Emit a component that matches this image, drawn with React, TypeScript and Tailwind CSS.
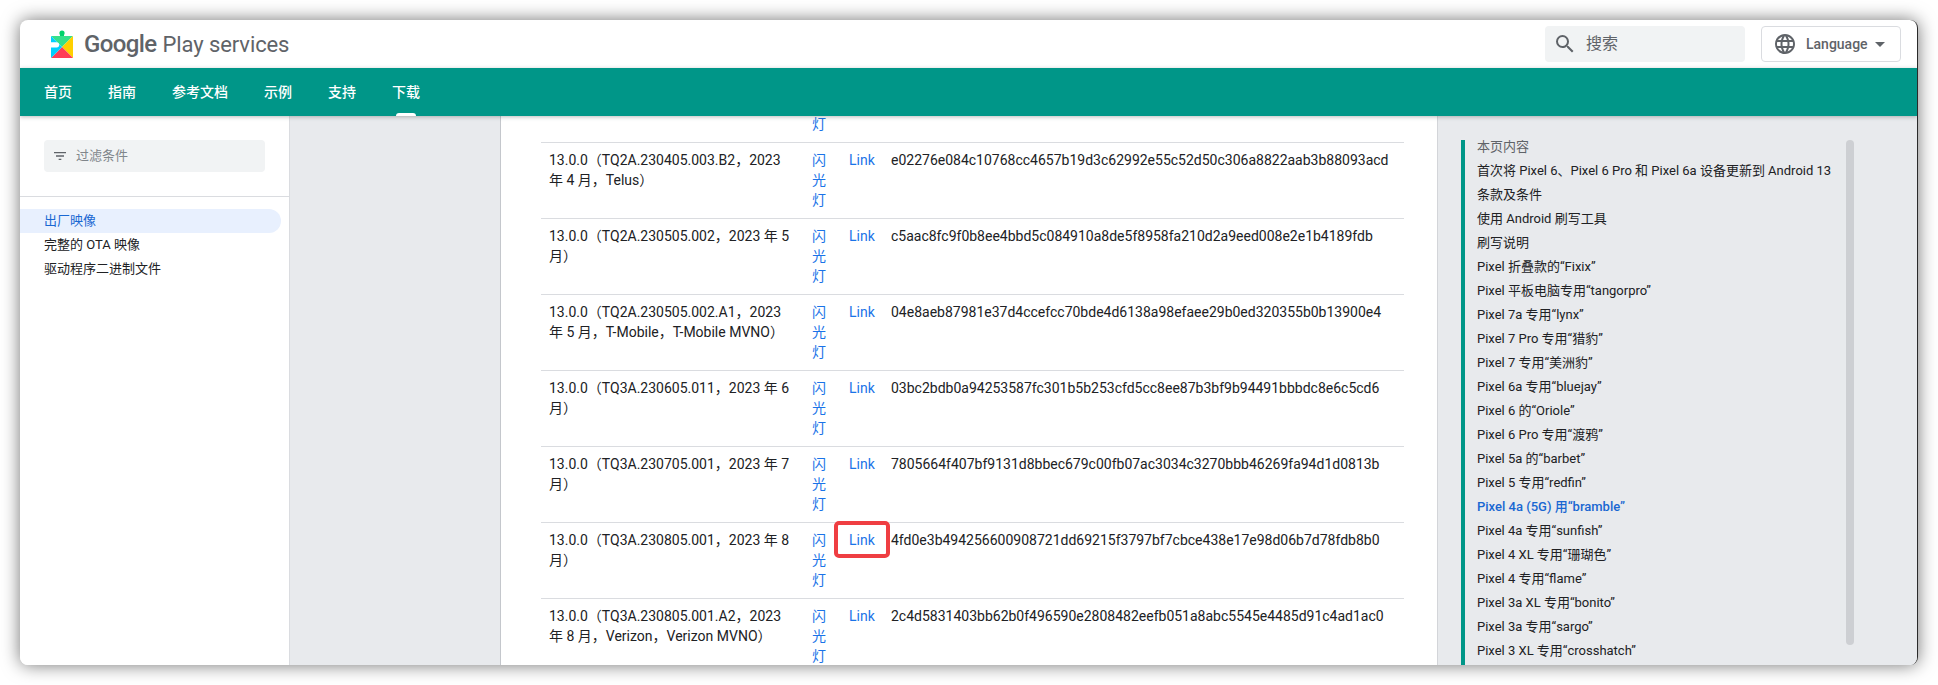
import React from "react";
import { MdSearch, MdLanguage, MdFilterList, MdArrowDropDown } from "react-icons/md";

const rows = [
  { a: "13.0.0（TQ2A.230405.003.B2，2023 年 4 月，Telus）", h: "e02276e084c10768cc4657b19d3c62992e55c52d50c306a8822aab3b88093acd" },
  { a: "13.0.0（TQ2A.230505.002，2023 年 5 月）", h: "c5aac8fc9f0b8ee4bbd5c084910a8de5f8958fa210d2a9eed008e2e1b4189fdb" },
  { a: "13.0.0（TQ2A.230505.002.A1，2023 年 5 月，T-Mobile，T-Mobile MVNO）", h: "04e8aeb87981e37d4ccefcc70bde4d6138a98efaee29b0ed320355b0b13900e4" },
  { a: "13.0.0（TQ3A.230605.011，2023 年 6 月）", h: "03bc2bdb0a94253587fc301b5b253cfd5cc8ee87b3bf9b94491bbbdc8e6c5cd6" },
  { a: "13.0.0（TQ3A.230705.001，2023 年 7 月）", h: "7805664f407bf9131d8bbec679c00fb07ac3034c3270bbb46269fa94d1d0813b" },
  { a: "13.0.0（TQ3A.230805.001，2023 年 8 月）", h: "4fd0e3b494256600908721dd69215f3797bf7cbce438e17e98d06b7d78fdb8b0", mark: true },
  { a: "13.0.0（TQ3A.230805.001.A2，2023 年 8 月，Verizon，Verizon MVNO）", h: "2c4d5831403bb62b0f496590e2808482eefb051a8abc5545e4485d91c4ad1ac0" },
];

const toc = [
  "首次将 Pixel 6、Pixel 6 Pro 和 Pixel 6a 设备更新到 Android 13",
  "条款及条件",
  "使用 Android 刷写工具",
  "刷写说明",
  "Pixel 折叠款的“Fixix”",
  "Pixel 平板电脑专用“tangorpro”",
  "Pixel 7a 专用“lynx”",
  "Pixel 7 Pro 专用“猎豹”",
  "Pixel 7 专用“美洲豹”",
  "Pixel 6a 专用“bluejay”",
  "Pixel 6 的“Oriole”",
  "Pixel 6 Pro 专用“渡鸦”",
  "Pixel 5a 的“barbet”",
  "Pixel 5 专用“redfin”",
  "Pixel 4a (5G) 用“bramble”",
  "Pixel 4a 专用“sunfish”",
  "Pixel 4 XL 专用“珊瑚色”",
  "Pixel 4 专用“flame”",
  "Pixel 3a XL 专用“bonito”",
  "Pixel 3a 专用“sargo”",
  "Pixel 3 XL 专用“crosshatch”",
];

function Logo() {
  return (
    <svg width="22" height="28" viewBox="0 0 22 28" className="shrink-0">
      <circle cx="11" cy="3" r="2.6" fill="#00d26a" />
      <rect x="9" y="3" width="4" height="4" fill="#00d26a" />
      <polygon points="0,6 22,6 11,17" fill="#35e08a" />
      <polygon points="22,6 22,28 11,17" fill="#ffd000" />
      <polygon points="0,28 22,28 11,17" fill="#ff3d57" />
      <polygon points="0,6 11,17 0,28" fill="#00d0ff" />
      <path d="M0 12.2 H5.6 a2.6 2.6 0 0 1 0 5.2 H0 Z" fill="#ffffff" />
    </svg>
  );
}

function Flash() {
  return <a className="block text-[#1a73e8]">闪光灯</a>;
}

export default function App() {
  return (
    <div className="h-[685px] w-full overflow-hidden bg-white pt-5 pl-5 font-['Roboto','Noto_Sans_CJK_SC',sans-serif] text-[#202124]">
      <div className="flex h-[645px] w-[1898px] flex-col overflow-hidden rounded-lg border-r border-[#2a2a2a] bg-white shadow-[0_0_18px_rgba(0,0,0,0.55)]">
        <header className="flex h-12 shrink-0 items-center pr-4 pl-[31px]">
          <Logo />
          <div className="ml-[11px] flex items-baseline text-[#5f6368]">
            <span className="text-[24px] font-medium tracking-[-0.6px]">Google</span>
            <span className="ml-[6px] text-[22px] tracking-[-0.1px]">Play services</span>
          </div>
          <div className="ml-auto flex h-9 w-[200px] items-center rounded bg-[#f1f3f4] pl-2 text-[#5f6368]">
            <MdSearch size={24} />
            <span className="ml-[9px] text-base">搜索</span>
          </div>
          <div className="ml-4 flex h-9 w-[140px] items-center rounded border border-[#dadce0] pl-[11px] text-[#5f6368]">
            <MdLanguage size={24} />
            <span className="ml-[9px] text-sm font-medium">Language</span>
            <MdArrowDropDown size={24} />
          </div>
        </header>

        <nav className="relative z-10 flex h-12 shrink-0 items-center gap-9 bg-[#009688] pl-6 text-sm font-medium text-white shadow-[0_1px_4px_rgba(60,64,67,0.35)]">
          <span>首页</span>
          <span>指南</span>
          <span>参考文档</span>
          <span>示例</span>
          <span>支持</span>
          <span className="relative">
            下载
            <span className="absolute top-[31px] left-1 h-[3px] w-5 rounded-t-sm bg-white" />
          </span>
        </nav>

        <div className="flex min-h-0 flex-1">
          <aside className="w-[270px] shrink-0 border-r border-[#dadce0] bg-white text-[13px] leading-6">
            <div className="border-b border-[#dadce0] px-6 py-6">
              <div className="flex h-8 w-[221px] items-center rounded bg-[#f1f3f4] pl-2 text-[#80868b]">
                <MdFilterList size={16} className="text-[#5f6368]" />
                <span className="ml-2">过滤条件</span>
              </div>
            </div>
            <ul className="pt-3">
              <li className="w-[261px] rounded-r-xl bg-[#e8f0fe] pl-6 text-[#1967d2]">出厂映像</li>
              <li className="pl-6">完整的 OTA 映像</li>
              <li className="pl-6">驱动程序二进制文件</li>
            </ul>
          </aside>

          <div className="w-[210px] shrink-0 bg-[#e8eaed]" />

          <main className="w-[938px] shrink-0 overflow-hidden border-x border-l-[#c4c7cc] border-r-[#d3d5d9] bg-white pl-10 text-sm leading-5">
            <table className="w-[863px] table-fixed border-collapse">
              <colgroup>
                <col className="w-[263px]" />
                <col className="w-[37px]" />
                <col className="w-[42px]" />
                <col />
              </colgroup>
              <tbody>
                <tr className="border-b border-[#dadce0]">
                  <td className="p-0" />
                  <td className="px-2 pt-0 pb-[10px] align-top leading-4">
                    <a className="block text-[#1a73e8]">灯</a>
                  </td>
                  <td className="p-0" />
                  <td className="p-0" />
                </tr>
                {rows.map((r) => (
                  <tr key={r.h} className="border-b border-[#dadce0]">
                    <td className="px-2 pt-[7px] pb-2 align-top">{r.a}</td>
                    <td className="px-2 pt-[7px] pb-2 align-top"><Flash /></td>
                    <td className="px-2 pt-[7px] pb-2 align-top">
                      <a className="relative whitespace-nowrap text-[#1a73e8]">
                        Link
                        {r.mark && (
                          <span className="absolute -top-[11px] -left-[15px] h-[37px] w-[56px] rounded-[5px] border-4 border-[#ef3e42]" />
                        )}
                      </a>
                    </td>
                    <td className="px-2 pt-[7px] pb-2 align-top whitespace-nowrap">{r.h}</td>
                  </tr>
                ))}
              </tbody>
            </table>
          </main>

          <div className="min-w-0 flex-1 bg-[#e8eaed] pt-6 pl-[23px] text-[13px] leading-6">
            <div className="flex h-full w-[393px] items-start justify-between border-l-4 border-[#009688]">
              <ul className="-mt-[5px] pl-3 whitespace-nowrap">
                <li className="text-[#5f6368]">本页内容</li>
                {toc.map((t) =>
                  t.includes("bramble") ? (
                    <li key={t} className="font-medium text-[#1967d2]">{t}</li>
                  ) : (
                    <li key={t}>{t}</li>
                  )
                )}
              </ul>
              <div className="h-[505px] w-2 rounded bg-[#cdcfd3]" />
            </div>
          </div>
        </div>
      </div>
    </div>
  );
}
